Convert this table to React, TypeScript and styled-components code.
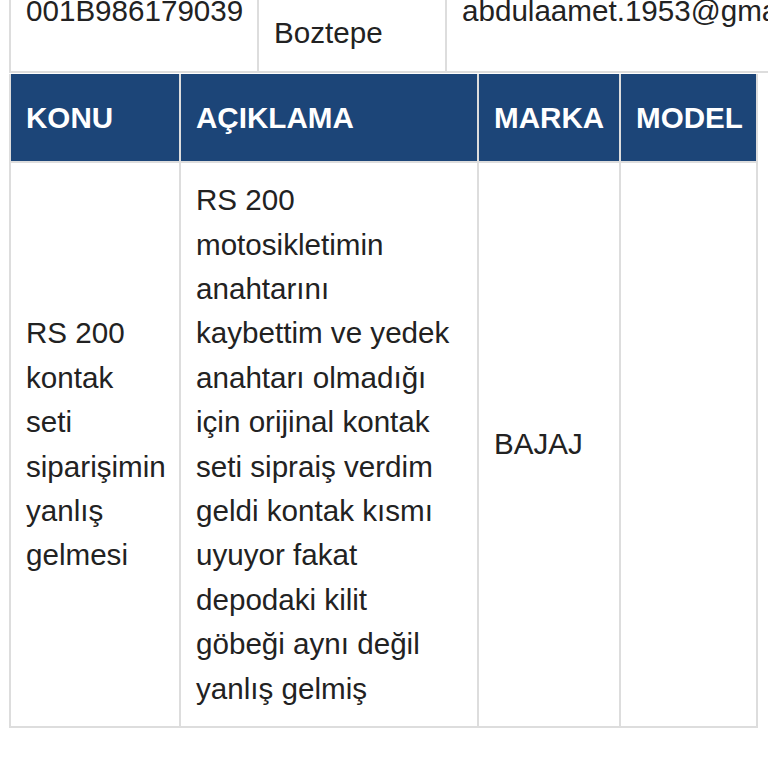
import React from "react";
import styled, { createGlobalStyle } from "styled-components";

const GlobalStyle = createGlobalStyle`
  html, body {
    margin: 0;
    padding: 0;
    background: #ffffff;
    overflow: hidden;
  }
  body {
    font-family: "Liberation Sans", Arial, Helvetica, sans-serif;
    color: #222222;
  }
`;

const Page = styled.div`
  margin-top: -50px;
  padding-left: 9px;
  width: 1400px;
`;

const Table = styled.table<{ $width: number; $gap?: number }>`
  border-collapse: separate;
  border-spacing: 0;
  table-layout: fixed;
  width: ${(p) => p.$width}px;
  border-left: 2px solid #dddddd;
  margin-top: ${(p) => p.$gap ?? 0}px;
  font-size: 29.6px;
  line-height: 44.4px;
`;

const TopTable = styled(Table)`
  border-top: 2px solid #dddddd;
`;

const Cell = styled.td<{ $w: number; $padRight?: number }>`
  box-sizing: border-box;
  width: ${(p) => p.$w}px;
  padding: 15px ${(p) => p.$padRight ?? 15}px 15px 15px;
  border-right: 2px solid #dddddd;
  border-bottom: 2px solid #dddddd;
  vertical-align: middle;
  text-align: left;
  white-space: normal;
  color: #222222;
`;

const HeadCell = styled.th<{ $w: number }>`
  box-sizing: border-box;
  width: ${(p) => p.$w}px;
  padding: 22px 15px 21px 15px;
  background: #1c4578;
  color: #ffffff;
  font-weight: 700;
  text-align: left;
  vertical-align: middle;
  white-space: nowrap;
  border-right: 2px solid #dddddd;
  border-bottom: 2px solid #dddddd;
`;

const NoWrap = styled.span`
  white-space: nowrap;
`;

export default function App() {
  return (
    <>
      <GlobalStyle />
      <Page>
        <TopTable $width={838}>
          <tbody>
            <tr>
              <Cell $w={248}>
                <NoWrap>001B986179039</NoWrap>
              </Cell>
              <Cell $w={188}>
                Ortahisar
                <br />
                Boztepe
              </Cell>
              <Cell $w={400}>
                <NoWrap>abdulaamet.1953@gmail.com</NoWrap>
              </Cell>
            </tr>
          </tbody>
        </TopTable>
        <Table $width={749} $gap={1}>
          <thead>
            <tr>
              <HeadCell $w={170}>KONU</HeadCell>
              <HeadCell $w={298}>AÇIKLAMA</HeadCell>
              <HeadCell $w={142}>MARKA</HeadCell>
              <HeadCell $w={137}>MODEL</HeadCell>
            </tr>
          </thead>
          <tbody>
            <tr>
              <Cell $w={170} $padRight={16}>
                RS 200 kontak seti siparişimin yanlış gelmesi
              </Cell>
              <Cell $w={298} $padRight={20}>
                RS 200 motosikletimin anahtarını kaybettim ve yedek anahtarı
                olmadığı için orijinal kontak seti sipraiş verdim geldi kontak
                kısmı uyuyor fakat depodaki kilit göbeği aynı değil yanlış
                gelmiş
              </Cell>
              <Cell $w={142}>BAJAJ</Cell>
              <Cell $w={137}></Cell>
            </tr>
          </tbody>
        </Table>
      </Page>
    </>
  );
}
